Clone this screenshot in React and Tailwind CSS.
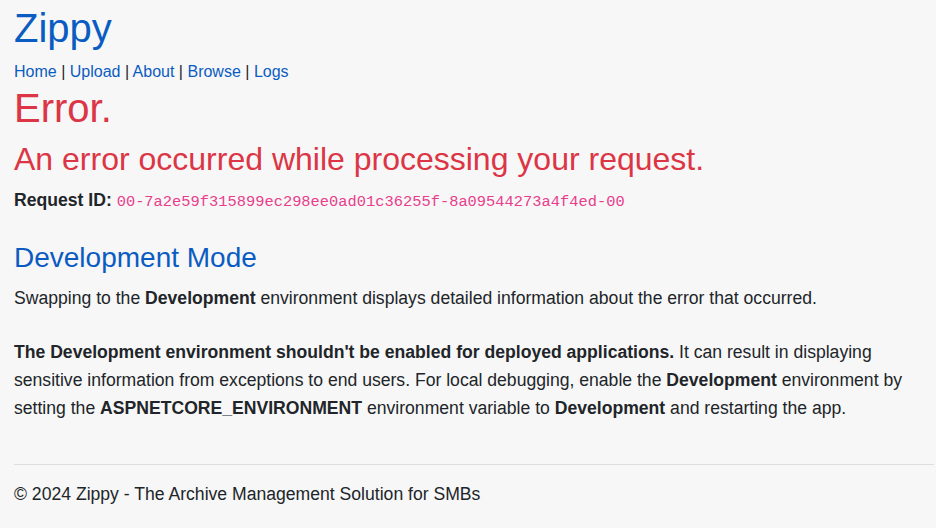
export default function App() {
  const links = ['Home', 'Upload', 'About', 'Browse', 'Logs'];

  return (
    <div className="min-h-[528px] bg-[#f7f7f7] pl-[14px] pr-[2px] pt-[4px] text-[17.6px] leading-[28px] text-[#212529] font-['Liberation_Sans',Arial,sans-serif]">
      {/* Header */}
      <header>
        <h1 className="text-[40px] leading-[48px] text-[#0b5cc2] mb-[6px]">Zippy</h1>
        <nav className="text-[16px] text-[#0b5cc2]">
          {links.map((l, i) => (
            <span key={l}>
              <a href="#" className="text-[#0b5cc2]">{l}</a>
              {i < links.length - 1 && <span className="text-[#212529]"> | </span>}
            </span>
          ))}
        </nav>
      </header>

      {/* Error body */}
      <main>
        <h1 className="text-[40px] leading-[48px] text-[#dc3545] mt-[-2px] mb-[8px]">Error.</h1>
        <h2 className="text-[32px] leading-[38px] text-[#dc3545] mb-[8px]">
          An error occurred while processing your request.
        </h2>
        <p className="mb-[25px]">
          <strong>Request ID:</strong>{' '}
          <code className="font-['Liberation_Mono',monospace] text-[15.4px] text-[#e83e8c]">
            00-7a2e59f315899ec298ee0ad01c36255f-8a09544273a4f4ed-00
          </code>
        </p>

        <h3 className="text-[28px] leading-[34px] text-[#0b5cc2] mb-[9px]">Development Mode</h3>
        <p className="mb-[26px]">
          Swapping to the <strong>Development</strong> environment displays detailed information about the error that occurred.
        </p>
        <p>
          <strong>The Development environment shouldn't be enabled for deployed applications.</strong> It can result in
          displaying sensitive information from exceptions to end users. For local debugging, enable the{' '}
          <strong>Development</strong> environment by setting the <strong>ASPNETCORE_ENVIRONMENT</strong> environment
          variable to <strong>Development</strong> and restarting the app.
        </p>
      </main>

      {/* Footer */}
      <footer className="mt-[42px]">
        <hr className="border-0 border-t border-[#dedede]" />
        <p className="mt-[15px] pb-[20px]">© 2024 Zippy - The Archive Management Solution for SMBs</p>
      </footer>
    </div>
  );
}
